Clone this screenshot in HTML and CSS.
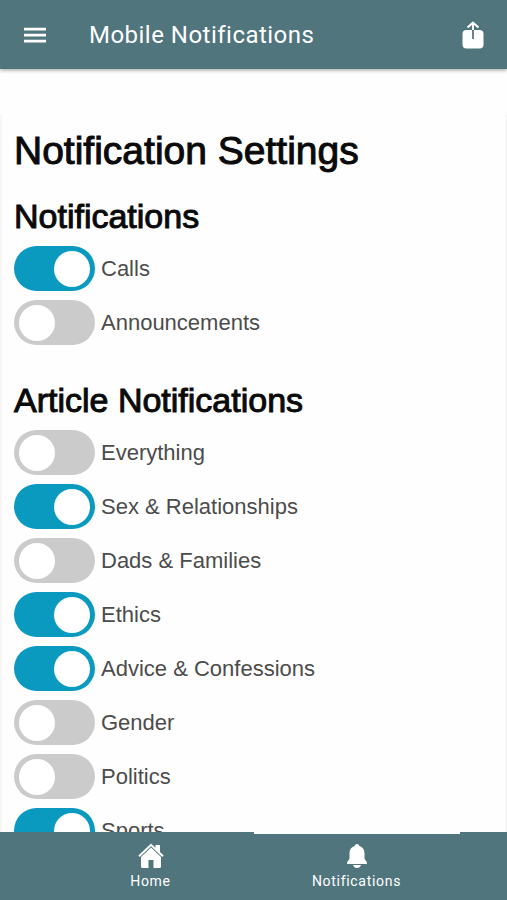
FILE: index.html
```html
<!DOCTYPE html>
<html lang="en">
<head>
<meta charset="utf-8">
<meta name="viewport" content="width=device-width, initial-scale=1">
<title>Mobile Notifications</title>
<link rel="stylesheet" href="styles.css">
</head>
<body>
<header class="app-bar">
  <button class="icon-button" type="button" aria-label="Menu">
    <svg width="24" height="18" viewBox="0 0 24 18" fill="currentColor"><path d="M1 1.800h22v2.600H1zM1 7.800h22v2.600H1zM1 13.800h22v2.600H1z"/></svg>
  </button>
  <div class="app-title">Mobile Notifications</div>
  <button class="icon-button" type="button" aria-label="Share">
    <svg width="22" height="28" viewBox="0 0 22 28">
      <rect x=".5" y="9" width="21" height="18.500" rx="4" fill="#fff"/>
      <path d="M11 9v9" stroke="#68858c" stroke-width="2" fill="none"/>
      <path d="M11 2v7M5.500 6.500 11 1.700l5.500 4.800" stroke="#fff" stroke-width="2" fill="none"/>
    </svg>
  </button>
</header>
<main class="content">
  <div class="panel">
    <h1>Notification Settings</h1>
    <section class="group">
      <h2>Notifications</h2>
      <label class="row"><input type="checkbox" class="switch" checked>Calls</label>
      <label class="row"><input type="checkbox" class="switch">Announcements</label>
    </section>
    <section class="group">
      <h2>Article Notifications</h2>
      <label class="row"><input type="checkbox" class="switch">Everything</label>
      <label class="row"><input type="checkbox" class="switch" checked>Sex &amp; Relationships</label>
      <label class="row"><input type="checkbox" class="switch">Dads &amp; Families</label>
      <label class="row"><input type="checkbox" class="switch" checked>Ethics</label>
      <label class="row"><input type="checkbox" class="switch" checked>Advice &amp; Confessions</label>
      <label class="row"><input type="checkbox" class="switch">Gender</label>
      <label class="row"><input type="checkbox" class="switch">Politics</label>
      <label class="row"><input type="checkbox" class="switch" checked>Sports</label>
    </section>
  </div>
</main>
<nav class="tabs">
  <a class="tab" href="#home">
    <svg width="26" height="26" viewBox="0 0 26 26" fill="currentColor"><path d="M13 .5 17.500 4.800V2H22v7l3.700 3.600-1.400 1.500L13 3.300 1.700 14.100.3 12.600z"/><path d="M13 4.400 23 14V23.500q0 1.500-1.500 1.500H15.500v-8h-5v8H4.500Q3 25 3 23.500V14z"/></svg>
    Home
  </a>
  <a class="tab tab-active" href="#notifications" aria-current="page">
    <svg width="22" height="26" viewBox="0 0 22 26" fill="currentColor"><path d="M11 1c1.500 0 2.200 1 2.300 2 3.200 1 5.200 3.500 5.200 7v5.500c0 1.500 2.500 2.500 2.500 4.500 0 .6-.4 1-1 1H2c-.6 0-1-.4-1-1 0-2 2.500-3 2.500-4.500V10c0-3.500 2-6 5.200-7C8.800 2 9.500 1 11 1zM7 22h8c-.6 2-2 3-4 3s-3.400-1-4-3z"/></svg>
    Notifications
  </a>
</nav>
</body>
</html>
```
FILE: styles.css
```css
* {
  box-sizing: border-box;
}

body {
  margin: 0;
  height: 100vh;
  display: flex;
  flex-direction: column;
  background: #fefefe;
  font-family: "Liberation Sans", Arial, sans-serif;
}

.app-bar {
  flex: none;
  height: 69px;
  padding: 0 21px 0 22px;
  display: flex;
  align-items: center;
  background: #50757d;
  color: #fff;
  box-shadow: 0 1px 4px rgba(0, 0, 0, 0.4);
  position: relative;
}

.app-title {
  flex: 1;
  margin-left: 41px;
  font-family: Roboto, sans-serif;
  font-size: 24px;
  line-height: 32px;
  letter-spacing: 0.02em;
}

.icon-button {
  padding: 0;
  border: 0;
  background: none;
  color: inherit;
  display: flex;
  justify-content: center;
  min-width: 26px;
}

.content {
  flex: 1;
  min-height: 0;
  overflow: hidden;
  padding-top: 46px;
}

.panel {
  padding: 12px 12px 0;
  border: 2px solid #f7f7f7;
  border-top: 0;
}

h1,
h2 {
  margin: 0;
  color: #0a0a0a;
  font-weight: 400;
  -webkit-text-stroke: 1px #0a0a0a;
}

h1 {
  font-size: 39px;
  line-height: 48px;
}

h2 {
  font-size: 34px;
  line-height: 40px;
  margin-bottom: 10px;
}

.group {
  margin-top: 21px;
}

.group + .group {
  margin-top: 35px;
}

.row {
  display: flex;
  align-items: center;
  gap: 6px;
  margin-bottom: 9px;
  color: #4c4c4c;
  font-size: 22px;
  line-height: 28px;
}

.switch {
  appearance: none;
  flex: none;
  margin: 0;
  width: 81px;
  height: 45px;
  padding: 0 5px;
  border-radius: 23px;
  background: #cbcbcb;
  display: flex;
  align-items: center;
}

.switch::before {
  content: "";
  width: 36px;
  height: 36px;
  border-radius: 50%;
  background: #fff;
}

.switch:checked {
  background: #0a9abf;
  justify-content: flex-end;
}

.tabs {
  flex: none;
  height: 68px;
  display: flex;
  justify-content: center;
  background: #50757d;
}

.tab {
  flex: 0 1 206px;
  padding-top: 9px;
  border-top: 2px solid transparent;
  display: flex;
  flex-direction: column;
  align-items: center;
  gap: 2px;
  color: #fff;
  font-family: Roboto, sans-serif;
  font-size: 14px;
  line-height: 20px;
  letter-spacing: 0.05em;
  text-decoration: none;
}

.tab-active {
  border-top-color: #fefefe;
}
```
